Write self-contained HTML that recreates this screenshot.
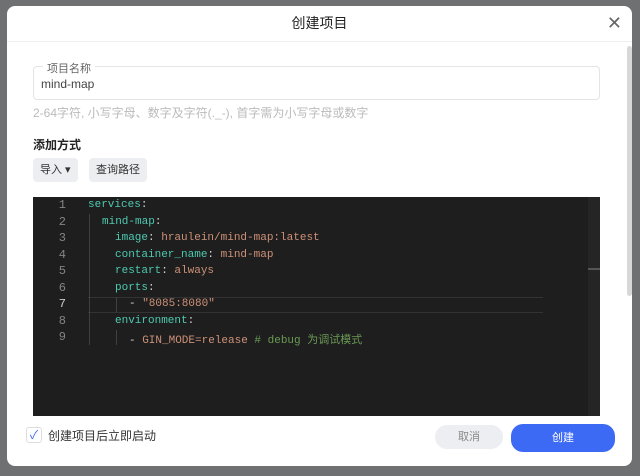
<!DOCTYPE html><html><head><meta charset="utf-8"><style>
body{margin:0;width:640px;height:476px;background:#6f7072;position:relative;overflow:hidden;font-family:"Liberation Sans","Noto Sans CJK SC",sans-serif}
.m{position:absolute;left:7px;top:6px;width:625px;height:460px;background:#fff;border-radius:8px;overflow:hidden}
.t{position:absolute;left:0;top:0;width:100%;height:35px;border-bottom:1px solid #eee;text-align:center;line-height:35px;font-size:14px;color:#222}
.x{position:absolute;right:10px;top:0;font-size:18px;color:#666;line-height:35px}
.sb{position:absolute;right:0;top:40px;width:5px;height:250px;background:#d8d8d8;border-radius:3px}
.inp{position:absolute;left:26px;top:60px;width:565px;height:32px;border:1px solid #e4e4e4;border-radius:4px}
.lab{position:absolute;left:36px;top:54px;background:#fff;padding:0 4px;font-size:11px;color:#666}
.val{position:absolute;left:34px;top:71px;font-size:12px;color:#444}
.hint{position:absolute;left:26px;top:98px;font-size:12px;color:#bbb}
.h{position:absolute;left:26px;top:130px;font-size:12px;color:#222;font-weight:bold}
.b{position:absolute;top:152px;height:24px;line-height:24px;background:#eceef1;border-radius:4px;font-size:11px;color:#333;padding:0 7px}
.ed{position:absolute;left:26px;top:191px;width:567px;height:219px;background:#1e1e1e;font-family:"Liberation Mono","Noto Sans CJK SC",monospace;font-size:11px}
.ln{position:absolute;left:0;width:33px;text-align:right;color:#858585;font-size:12px}
.cl{position:absolute;white-space:pre;color:#ce9178;top:0}
.k{color:#4ec9b0}.c{color:#6a9955}.w{color:#d4d4d4}
.g{position:absolute;width:1px;background:#404040}
.cb{position:absolute;left:19px;top:421px;width:14px;height:14px;border:1px solid #ddd;border-radius:3px;color:#3d6af5;font-size:12px;line-height:14px;text-align:center}
</style></head><body><div class="m">
<div class="t">创建项目<span class="x">✕</span></div><div class="sb"></div>
<div class="inp"></div><div class="lab">项目名称</div><div class="val">mind-map</div>
<div class="hint">2-64字符, 小写字母、数字及字符(._-), 首字需为小写字母或数字</div>
<div class="h">添加方式</div>
<div class="b" style="left:26px">导入 ▾</div><div class="b" style="left:82px">查询路径</div>
<div class="ed">
<div style="position:absolute;left:55px;top:100px;width:455px;height:14px;border-top:1px solid #333;border-bottom:1px solid #333"></div>
<div style="position:absolute;right:0;top:0;width:12px;height:219px;background:#252525"></div>
<div style="position:absolute;right:0;top:71px;width:12px;height:2px;background:#555"></div>
<div class="g" style="left:56px;top:17px;height:131px"></div>
<div class="g" style="left:83px;top:100px;height:15px"></div>
<div class="g" style="left:83px;top:133px;height:15px"></div>
<div class="ln" style="top:1px">1</div><div class="ln" style="top:18px">2</div><div class="ln" style="top:34px">3</div><div class="ln" style="top:51px">4</div><div class="ln" style="top:67px">5</div><div class="ln" style="top:84px">6</div><div class="ln" style="top:100px;color:#ccc">7</div><div class="ln" style="top:117px">8</div><div class="ln" style="top:133px">9</div>
<div class="cl" style="left:55px;top:2px"><span class="k">services</span><span class="w">:</span></div>
<div class="cl" style="left:69px;top:19px"><span class="k">mind-map</span><span class="w">:</span></div>
<div class="cl" style="left:82px;top:35px"><span class="k">image</span><span class="w">: </span>hraulein/mind-map:latest</div>
<div class="cl" style="left:82px;top:52px"><span class="k">container_name</span><span class="w">: </span>mind-map</div>
<div class="cl" style="left:82px;top:68px"><span class="k">restart</span><span class="w">: </span>always</div>
<div class="cl" style="left:82px;top:85px"><span class="k">ports</span><span class="w">:</span></div>
<div class="cl" style="left:96px;top:101px"><span class="w">- </span>"8085:8080"</div>
<div class="cl" style="left:82px;top:118px"><span class="k">environment</span><span class="w">:</span></div>
<div class="cl" style="left:96px;top:134px"><span class="w">- </span>GIN_MODE=release <span class="c"># debug 为调试模式</span></div>
</div>
<div class="cb">✓</div><div style="position:absolute;left:41px;top:421px;font-size:12px;color:#333">创建项目后立即启动</div>
<div style="position:absolute;left:428px;top:419px;width:68px;height:24px;border-radius:12px;background:#eceef1;font-size:11px;color:#888;text-align:center;line-height:24px">取消</div>
<div style="position:absolute;left:504px;top:418px;width:104px;height:28px;border-radius:12px;background:#3d6af5;font-size:11px;color:#fff;text-align:center;line-height:28px">创建</div>
</div></body></html>
